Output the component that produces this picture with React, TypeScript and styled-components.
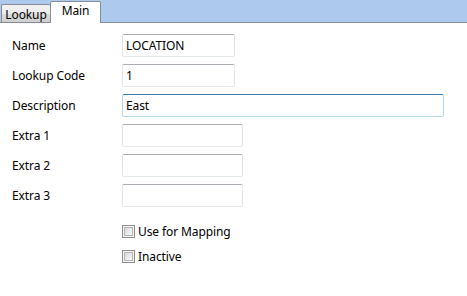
import { FC, Fragment } from 'react';
import styled, { createGlobalStyle } from 'styled-components';

const GlobalStyle = createGlobalStyle`
  html, body {
    margin: 0;
    padding: 0;
    background: #ffffff;
  }
  body {
    font-family: 'Noto Sans', 'Open Sans', sans-serif;
    font-size: 12px;
    letter-spacing: -0.1px;
    color: #000000;
  }
`;

const Window = styled.div`
  width: 467px;
  height: 296px;
  display: flex;
  flex-direction: column;
  background: #ffffff;
  overflow: hidden;
`;

const TabStrip = styled.div`
  height: 22px;
  display: flex;
  align-items: flex-end;
  padding-left: 1px;
  background: #adcaee;
  border-bottom: 1px solid #898c95;
`;

const Tab = styled.div<{ $active?: boolean }>`
  box-sizing: border-box;
  display: flex;
  align-items: center;
  justify-content: center;
  border: 1px solid #898c95;
  border-bottom: none;
  border-radius: 2px 2px 0 0;
  position: relative;
  ${({ $active }) =>
    $active
      ? `
    width: 51px;
    height: 22px;
    margin-bottom: -1px;
    padding-bottom: 4px;
    background: #ffffff;
    z-index: 1;
  `
      : `
    width: 49px;
    height: 18px;
    padding-top: 1px;
    background: linear-gradient(#f2f2f2 0%, #ebebeb 50%, #dddddd 51%, #cfcfcf 100%);
    border-right: none;
  `}
`;

const Form = styled.div`
  display: grid;
  grid-template-columns: 110px 1fr;
  grid-auto-rows: 23px;
  row-gap: 7px;
  padding: 11px 0 0 12px;
  align-items: center;
`;

const Label = styled.label`
  line-height: 23px;
`;

const TextBox = styled.div<{ $width: number; $focused?: boolean }>`
  box-sizing: border-box;
  width: ${({ $width }) => $width}px;
  height: 23px;
  padding: 0 3px;
  display: flex;
  align-items: center;
  border: 1px solid ${({ $focused }) => ($focused ? '#b5d5ec' : '#e2e3ea')};
  border-top-color: ${({ $focused }) => ($focused ? '#3d7bad' : '#abadb3')};
  border-bottom-color: ${({ $focused }) => ($focused ? '#b7d9ed' : '#e3e9ef')};
  border-radius: 2px;
  background: #ffffff;
  white-space: nowrap;
`;

const Checks = styled.div`
  display: flex;
  flex-direction: column;
  gap: 12px;
  padding: 18px 0 0 122px;
`;

const CheckRow = styled.div`
  display: flex;
  align-items: center;
  gap: 3px;
  height: 13px;
`;

const Box = styled.span`
  box-sizing: border-box;
  width: 13px;
  height: 13px;
  border: 1px solid #8f8f8f;
  padding: 1px;
  background: #f4f4f4;
  display: flex;
`;

const BoxInner = styled.span`
  flex: 1;
  border: 1px solid #b4b4b4;
  background: linear-gradient(135deg, #d8d8d8 0%, #e9e9e9 50%, #fbfbfb 100%);
`;

const fields = [
  { label: 'Name', value: 'LOCATION', width: 113 },
  { label: 'Lookup Code', value: '1', width: 113 },
  { label: 'Description', value: 'East', width: 322, focused: true },
  { label: 'Extra 1', value: '', width: 121 },
  { label: 'Extra 2', value: '', width: 121 },
  { label: 'Extra 3', value: '', width: 121 },
];

const App: FC = () => {
  return (
    <Window>
      <GlobalStyle />
      <TabStrip>
        <Tab>Lookup</Tab>
        <Tab $active>Main</Tab>
      </TabStrip>
      <Form>
        {fields.map((f) => (
          <Fragment key={f.label}>
            <Label>{f.label}</Label>
            <TextBox $width={f.width} $focused={f.focused}>
              {f.value}
            </TextBox>
          </Fragment>
        ))}
      </Form>
      <Checks>
        <CheckRow>
          <Box>
            <BoxInner />
          </Box>
          Use for Mapping
        </CheckRow>
        <CheckRow>
          <Box>
            <BoxInner />
          </Box>
          Inactive
        </CheckRow>
      </Checks>
    </Window>
  );
};

export default App;
